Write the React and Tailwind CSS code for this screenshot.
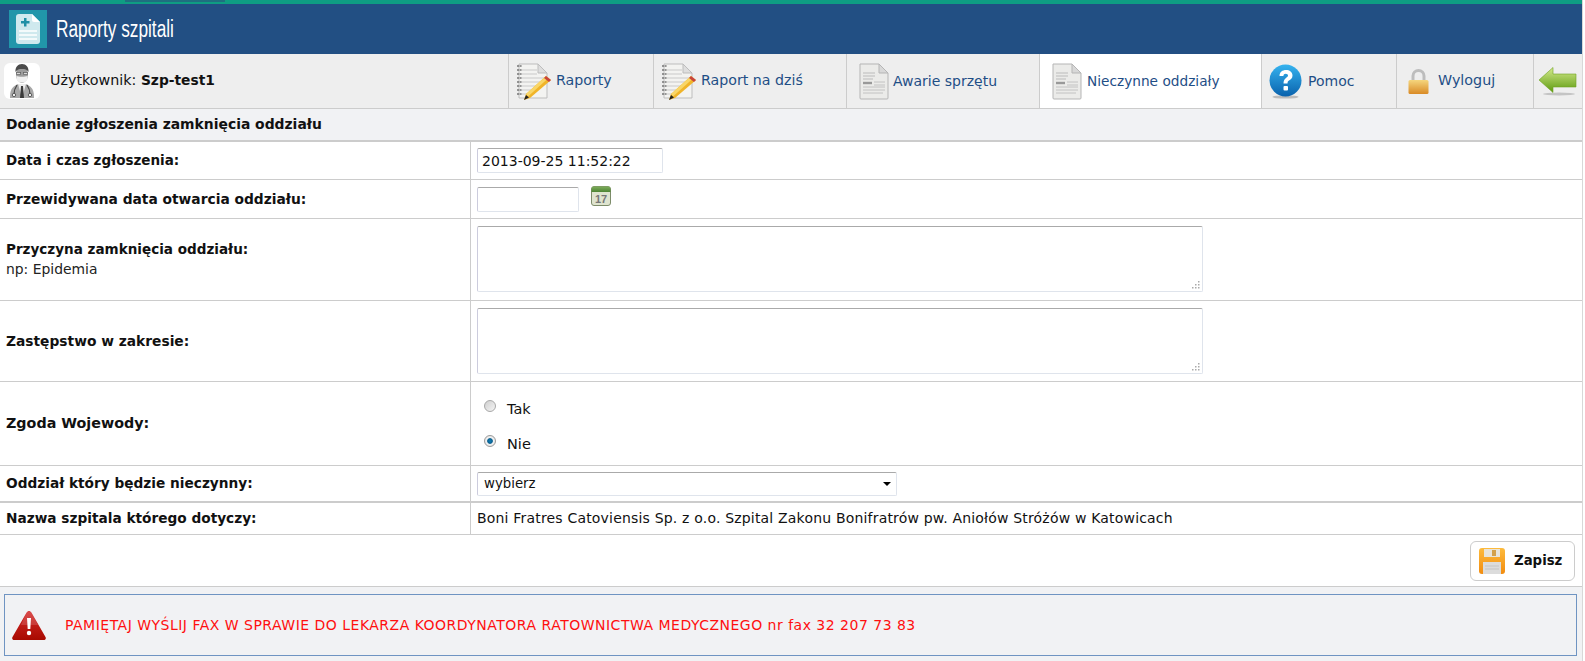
const verdana = 'font-["DejaVu_Sans",Verdana,sans-serif]'

function ReportLogo() {
  return (
    <div className="w-[38px] h-[38px] bg-[#2196aa] flex items-center justify-center shrink-0">
      <svg width="24" height="30" viewBox="0 0 24 30">
        <path d="M3 0H16L24 8V27a3 3 0 0 1-3 3H3a3 3 0 0 1-3-3V3a3 3 0 0 1 3-3z" fill="#cfe9ee" />
        <path d="M16 0L24 8H18a2 2 0 0 1-2-2z" fill="#fff" />
        <path d="M5 7h3V4h2.5v3h3v2.5h-3v3H8v-3H5z" fill="#1f8fa6" />
        <path d="M3 17h18M3 21h18M3 25h18" stroke="#fff" strokeWidth="1.4" />
      </svg>
    </div>
  )
}

function DoctorIcon() {
  return (
    <div className="w-9 h-9 bg-white rounded-md flex items-center justify-center shrink-0">
      <svg width="26" height="34" viewBox="0 0 26 34">
        {/* coat */}
        <path d="M1 34c0-7 1-11 8-14h8c7 3 8 7 8 14z" fill="#a8a8a8" />
        <path d="M9 20l4 14 4-14z" fill="#ececec" />
        <path d="M12 22h2l1 12h-4z" fill="#3a3a3a" />
        <path d="M8 21c-2 3-3 6-3 9M18 21c2 3 3 6 3 9" stroke="#444" strokeWidth="1.200" fill="none" />
        <circle cx="5" cy="31" r="1.700" fill="#eee" stroke="#444" strokeWidth="0.800" />
        <circle cx="21" cy="31" r="1.700" fill="#eee" stroke="#444" strokeWidth="0.800" />
        {/* head */}
        <ellipse cx="13" cy="10.500" rx="6" ry="8.500" fill="#9c9c9c" />
        <path d="M6.500 8C6 3 9 0 13 0s7 3 6.500 8C18 5.500 16 5 13 5S8 5.500 6.500 8z" fill="#4a4a4a" />
        <path d="M7.500 12c2 1 9 1 11 0v3.500c-1.500 4-9.500 4-11 0z" fill="#f0f0f0" />
        <path d="M7 8.800h5M14 8.800h5" stroke="#333" strokeWidth="0.900" />
        <path d="M7.500 8.800v1.700h4v-1.700M14.500 8.800v1.700h4v-1.700" stroke="#555" strokeWidth="0.600" fill="#d8d8d8" />
      </svg>
    </div>
  )
}

function NotepadIcon() {
  return (
    <svg width="36" height="37" viewBox="0 0 36 37" className="shrink-0">
      <path d="M3 1H22L31 10V35H3z" fill="#f3f3f1" stroke="#bdbdbd" />
      <path d="M22 1v9h9z" fill="#dedede" stroke="#bdbdbd" />
      <path d="M6 7h15M6 11h15M6 15h24M6 19h22M6 23h18M6 27h14M6 31h10" stroke="#c9c9c9" />
      <path d="M1 3h5M1 7h5M1 11h5M1 15h5M1 19h5M1 23h5M1 27h5M1 31h5" stroke="#777" strokeWidth="1.4" strokeDasharray="2 0.6" />
      <path d="M30 13l5 4L14 35l-6 2 2-6z" fill="#f0b429" />
      <path d="M30 13l2.5 2L12 33.5 10 31z" fill="#f9d667" />
      <path d="M30 13l5 4-2 2-5-4z" fill="#c8443c" />
      <path d="M8 37l2-5 3 2.500z" fill="#222" />
    </svg>
  )
}

function DocIcon() {
  return (
    <svg width="30" height="37" viewBox="0 0 30 37" className="shrink-0">
      <path d="M1 1H20L29 10V35a1 1 0 0 1-1 1H2a1 1 0 0 1-1-1z" fill="#ebebe9" stroke="#b5b5b5" />
      <path d="M20 1v9h9z" fill="#d8d8d8" stroke="#b5b5b5" />
      <path d="M4 10h12M4 13h12M4 16h10" stroke="#bbb" />
      <path d="M4 20h9" stroke="#999" strokeWidth="2.400" />
      <path d="M15 19h11M15 22h11M4 24h22M4 27h22M4 30h20" stroke="#c2c2c2" />
    </svg>
  )
}

function HelpIcon() {
  return (
    <svg width="33" height="35" viewBox="0 0 33 35" className="shrink-0">
      <defs>
        <linearGradient id="helpFill" x1="0" y1="0" x2="0" y2="1">
          <stop offset="0" stopColor="#35b3ef" />
          <stop offset="1" stopColor="#0a62ad" />
        </linearGradient>
      </defs>
      <ellipse cx="16.500" cy="33" rx="13" ry="1.600" fill="#bbb" />
      <circle cx="16.500" cy="16.500" r="16" fill="url(#helpFill)" />
      <path d="M10.500 12c0-4 3-6 6.500-6s6.500 2 6.500 5.500c0 3-2 4-3.500 5-1 .7-1.500 1.300-1.500 3h-4c0-3 .8-4.400 2.500-5.600 1.200-.9 2-1.400 2-2.400s-1-1.800-2.300-1.800-2.200.9-2.300 2.300z" fill="#fff" />
      <rect x="14.500" y="22" width="4.500" height="4.500" rx="1" fill="#fff" />
    </svg>
  )
}

function LockIcon() {
  return (
    <svg width="21" height="25" viewBox="0 0 21 25" className="shrink-0">
      <defs>
        <linearGradient id="lockFill" x1="0" y1="0" x2="0" y2="1">
          <stop offset="0" stopColor="#f5d67e" />
          <stop offset="1" stopColor="#d98a25" />
        </linearGradient>
      </defs>
      <path d="M5 12V7a5.500 5.500 0 0 1 11 0v5" fill="none" stroke="#bdbdbd" strokeWidth="3" />
      <rect x="0.500" y="11" width="20" height="14" rx="1.500" fill="url(#lockFill)" />
    </svg>
  )
}

function BackIcon() {
  return (
    <svg width="38" height="29" viewBox="0 0 38 29" className="shrink-0">
      <defs>
        <linearGradient id="backFill" x1="0" y1="0" x2="0" y2="1">
          <stop offset="0" stopColor="#d4ea8c" />
          <stop offset="1" stopColor="#5c9a0e" />
        </linearGradient>
      </defs>
      <ellipse cx="20" cy="27" rx="16" ry="1.500" fill="#c4c4c4" />
      <path d="M0 13L14 0.500V7H37V20H14V25.500z" fill="url(#backFill)" stroke="#6fa321" strokeWidth="0.600" />
    </svg>
  )
}

function CalendarIcon() {
  return (
    <svg width="20" height="20" viewBox="0 0 20 20" className="shrink-0 -mt-px">
      <defs>
        <linearGradient id="calFill" x1="0" y1="0" x2="0" y2="1">
          <stop offset="0" stopColor="#7fae5c" />
          <stop offset="1" stopColor="#4d8433" />
        </linearGradient>
      </defs>
      <rect x="0.500" y="0.500" width="19" height="19" rx="2.500" fill="#dfe4cf" stroke="#7d8c6a" />
      <path d="M0.500 6V3a2.500 2.500 0 0 1 2.500-2.500h14A2.500 2.500 0 0 1 19.500 3v3z" fill="url(#calFill)" />
      <text x="10" y="17" textAnchor="middle" fontSize="11" fontWeight="700" fontFamily="Liberation Sans" fill="#777">17</text>
    </svg>
  )
}

function SaveIcon() {
  return (
    <svg width="26" height="26" viewBox="0 0 26 26" className="shrink-0">
      <defs>
        <linearGradient id="saveFill" x1="0" y1="0" x2="0" y2="1">
          <stop offset="0" stopColor="#fdbb3d" />
          <stop offset="1" stopColor="#f28c0f" />
        </linearGradient>
      </defs>
      <rect width="26" height="26" rx="3" fill="url(#saveFill)" />
      <rect x="5" y="1" width="16" height="8" fill="#e8e4da" />
      <rect x="13" y="2" width="4" height="6" fill="#d3a04a" />
      <rect x="4" y="14" width="18" height="12" fill="#dcdcdc" />
      <path d="M6 18h14M6 21h14" stroke="#c4c4c4" />
    </svg>
  )
}

function WarningIcon() {
  return (
    <svg width="34" height="31" viewBox="0 0 34 31" className="shrink-0">
      <defs>
        <linearGradient id="warnFill" x1="0" y1="0" x2="0" y2="1">
          <stop offset="0" stopColor="#d42a2a" />
          <stop offset="1" stopColor="#a80a00" />
        </linearGradient>
      </defs>
      <path d="M17 1c1 0 1.800.5 2.400 1.600L33.500 27c.8 1.600 0 3-1.800 3H2.300c-1.800 0-2.600-1.400-1.800-3L14.600 2.600C15.200 1.500 16 1 17 1z" fill="url(#warnFill)" />
      <path d="M9 15L14.600 2.600C15.200 1.500 16 1 17 1s1.800.5 2.400 1.600L26 15z" fill="#fff" opacity="0.15" />
      <path d="M15 8h4l-.7 11h-2.600z" fill="#fff" />
      <circle cx="17" cy="23" r="2.200" fill="#fff" />
    </svg>
  )
}

const tabs = [
  { label: 'Raporty', icon: <NotepadIcon />, w: 'w-[145px]', pl: 'pl-[7px]', gap: 'gap-[4px]', text: 'text-[14.2px]' },
  { label: 'Raport na dziś', icon: <NotepadIcon />, w: 'w-[193px]', pl: 'pl-[7px]', gap: 'gap-[4px]', text: 'text-[14.2px]' },
  { label: 'Awarie sprzętu', icon: <DocIcon />, w: 'w-[193px]', pl: 'pl-[12px]', gap: 'gap-[4px]' },
  { label: 'Nieczynne oddziały', icon: <DocIcon />, w: 'w-[222px]', pl: 'pl-[12px]', gap: 'gap-[5px]', active: true, text: 'text-[13.7px]' },
  { label: 'Pomoc', icon: <HelpIcon />, w: 'w-[135px]', pl: 'pl-[7px]', gap: 'gap-[6px]' },
  { label: 'Wyloguj', icon: <LockIcon />, w: 'w-[137px]', pl: 'pl-[11px]', gap: 'gap-[9px]', text: 'text-[14.3px]' },
]

function Row({ label, labelSize = 'text-[13.8px]', hint, className, children }) {
  return (
    <div className={`flex border-b border-[#ccc] ${className}`}>
      <div className="w-[471px] shrink-0 border-r border-[#ccc] pl-[6px] flex flex-col justify-center">
        <div className={`font-bold text-[#111] ${labelSize}`}>{label}</div>
        {hint && <div className="text-[#222] text-[13.9px]">{hint}</div>}
      </div>
      <div className="flex-1 pl-[6px]">{children}</div>
    </div>
  )
}

function Radio({ label, checked }) {
  return (
    <div className="flex items-center gap-[11px] h-[12px] text-[#111] text-[14.5px]">
      {checked ? (
        <span className="w-3 h-3 rounded-full border border-[#9a9a9a] bg-[radial-gradient(circle,#0f7fb8_0,#0a5f8f_34%,#f2f2f2_46%,#dcdcdc_100%)]" />
      ) : (
        <span className="w-3 h-3 rounded-full border border-[#a8a8a8] bg-[linear-gradient(135deg,#cfcfcf,#f5f5f5)]" />
      )}
      <span className="relative top-[4px]">{label}</span>
    </div>
  )
}

function Memo() {
  return (
    <div className="relative mt-[7px] w-[726px] h-[66px]">
      <textarea className={`block w-full h-full resize-none ${fieldBorder}`} />
      <svg width="8" height="8" viewBox="0 0 8 8" className="absolute right-[3px] bottom-[3px]">
        <path d="M6 0h1.500v1.500H6zM3 3h1.500v1.500H3zM6 3h1.500v1.500H6zM0 6h1.500v1.500H0zM3 6h1.500v1.500H3zM6 6h1.500v1.500H6z" fill="#aaa" />
      </svg>
    </div>
  )
}

const fieldBorder = 'border border-[#dfe4ec] border-t-[#aaa] border-l-[#ccd] rounded-[2px] bg-white outline-none'

export default function App() {
  return (
    <div className={`w-[1585px] h-[661px] overflow-hidden bg-white text-[13px] ${verdana}`}>
      <div className="w-[1583px] h-full bg-white border-r border-[#d8d8d8]">
        {/* top strip */}
        <div className="h-1 bg-[#0f9d83]">
          <div className="ml-[125px] w-[100px] h-[2px] bg-[#1f6f80]" />
        </div>
        <div className="h-[50px] bg-[#224f83] flex items-center pl-[9px] gap-[9px]">
          <ReportLogo />
          <div className='text-white text-[23px] origin-left scale-x-[0.75] font-["Liberation_Sans",sans-serif]'>Raporty szpitali</div>
        </div>

        {/* nav */}
        <div className="h-[55px] bg-[#eeeeee] border-b border-[#ccc] flex">
          <div className="w-[508px] flex items-center pl-1 gap-[10px] text-[#111]">
            <DoctorIcon />
            <div className="text-[14.3px]">Użytkownik: <b className="text-[13.8px]">Szp-test1</b></div>
          </div>
          {tabs.map((t) => (
            <div
              key={t.label}
              className={`${t.w} ${t.pl} ${t.gap} ${t.active ? 'bg-white' : ''} ${t.text || 'text-[14px]'} border-l border-[#ccc] flex items-center text-[#1f4e86]`}
            >
              {t.icon}
              <span>{t.label}</span>
            </div>
          ))}
          <div className="flex-1 border-l border-[#ccc] flex items-center pl-[5px]">
            <BackIcon />
          </div>
        </div>

        {/* form */}
        <div className="h-[33px] bg-[#f1f2f4] border-b-2 border-[#ccc] flex items-center pl-[6px] font-bold text-[#111] text-[13.9px]">
          Dodanie zgłoszenia zamknięcia oddziału
        </div>
        <Row label="Data i czas zgłoszenia:" labelSize="text-[13.5px]" className="h-[38px]">
          <input readOnly value="2013-09-25 11:52:22" className={`mt-[6px] w-[186px] h-[25px] px-1 text-[14px] text-[#111] ${fieldBorder}`} />
        </Row>
        <Row label="Przewidywana data otwarcia oddziału:" className="h-[39px]">
          <div className="flex items-start gap-3 pt-[7px]">
            <input readOnly className={`w-[102px] h-[25px] ${fieldBorder}`} />
            <CalendarIcon />
          </div>
        </Row>
        <Row label="Przyczyna zamknięcia oddziału:" labelSize="text-[13.55px]" hint="np: Epidemia" className="h-[82px]">
          <Memo />
        </Row>
        <Row label="Zastępstwo w zakresie:" className="h-[81px]">
          <Memo />
        </Row>
        <Row label="Zgoda Wojewody:" labelSize="text-[14.3px]" className="h-[84px]">
          <div className="pl-[7px] pt-[18px] flex flex-col gap-[23px]">
            <Radio label="Tak" />
            <Radio label="Nie" checked />
          </div>
        </Row>
        <Row label="Oddział który będzie nieczynny:" labelSize="text-[13.7px]" className="h-[37px] border-b-2">
          <div className="relative mt-[6px] w-[420px]">
            <select className={`block w-full h-[24px] pl-[6px] text-[13.3px] text-[#111] appearance-none ${fieldBorder}`}>
              <option>wybierz</option>
            </select>
            <span className="absolute right-[6px] top-[10px] w-0 h-0 border-x-[4px] border-x-transparent border-t-[4px] border-t-black" />
          </div>
        </Row>
        <Row label="Nazwa szpitala którego dotyczy:" labelSize="text-[13.7px]" className="h-[32px]">
          <div className="h-full flex items-center text-[#111] text-[14px] tracking-[0.185px]">
            Boni Fratres Catoviensis Sp. z o.o. Szpital Zakonu Bonifratrów pw. Aniołów Stróżów w Katowicach
          </div>
        </Row>

        {/* save */}
        <div className="h-[52px] border-b border-[#ccc] flex justify-end items-center pr-[7px]">
          <div className="w-[105px] h-[40px] border border-[#ccc] rounded-[6px] flex items-center pl-2 gap-[9px] font-bold text-[#111] text-[13.3px]">
            <SaveIcon />
            Zapisz
          </div>
        </div>

        {/* alert */}
        <div className="h-[74px] bg-[#f1f2f4] pt-[7px] pl-1 pr-[5px]">
          <div className="h-[62px] border border-[#6f94c2] flex items-center pl-[7px] gap-[19px] text-[#ff0f0f] text-[14px] tracking-[0.49px]">
            <WarningIcon />
            <span>PAMIĘTAJ WYŚLIJ FAX W SPRAWIE DO LEKARZA KOORDYNATORA RATOWNICTWA MEDYCZNEGO nr fax 32 207 73 83</span>
          </div>
        </div>
      </div>
    </div>
  )
}
